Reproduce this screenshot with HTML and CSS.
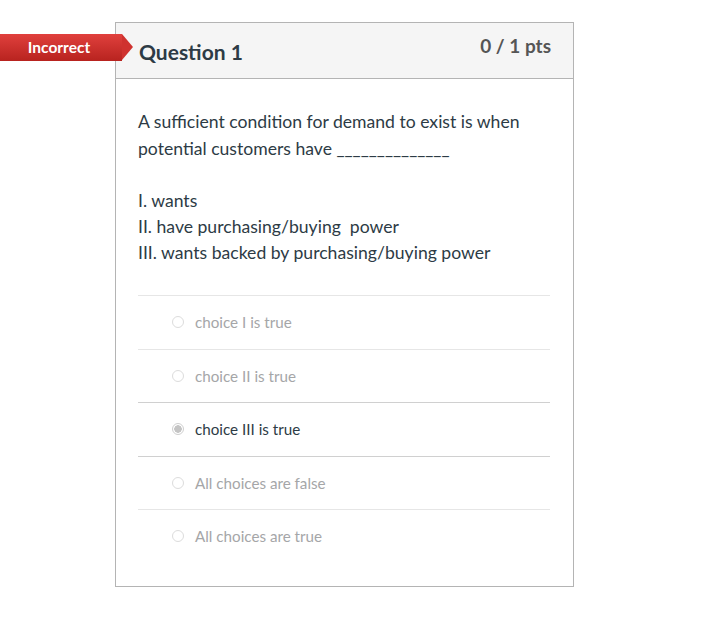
FILE: index.html
```html
<!DOCTYPE html>
<html lang="en">
<head>
    <meta charset="UTF-8">
    <title>Question 1</title>
    <link rel="stylesheet" href="styles.css">
</head>
<body>
    <div class="question">
        <div class="flag">Incorrect</div>
        <div class="header">
            <span class="name">Question 1</span>
            <span class="points">0 / 1 pts</span>
        </div>
        <div class="content">
            <p class="text">A sufficient condition for demand to exist is when potential customers have ______________</p>
            <p class="text">I. wants<br>II. have purchasing/buying&nbsp; power<br>III. wants backed by purchasing/buying power</p>
            <div class="answers">
                <div class="answer"><span class="radio"></span>choice I is true</div>
                <div class="answer"><span class="radio"></span>choice II is true</div>
                <div class="answer selected"><span class="radio"></span>choice III is true</div>
                <div class="answer"><span class="radio"></span>All choices are false</div>
                <div class="answer"><span class="radio"></span>All choices are true</div>
            </div>
        </div>
    </div>
</body>
</html>
```

FILE: styles.css
```css
body {
    margin: 0;
    font-family: Lato, "Open Sans", sans-serif;
    color: #2d3b45;
    background: #fff;
}

.question {
    position: relative;
    width: 457px;
    margin: 22px 0 0 115px;
    border: 1px solid #b4b4b4;
}

.flag {
    position: absolute;
    left: -116px;
    top: 11px;
    width: 122px;
    height: 27px;
    line-height: 27px;
    padding-right: 4px;
    text-align: center;
    color: #fff;
    font-size: 15.5px;
    font-weight: bold;
    background: linear-gradient(#e0403d, #b8231f);
    box-sizing: border-box;
}

.flag::after {
    content: "";
    position: absolute;
    right: -11px;
    top: 0;
    border-top: 13.5px solid transparent;
    border-bottom: 13.5px solid transparent;
    border-left: 11px solid #cf322f;
}

.header {
    display: flex;
    justify-content: space-between;
    height: 55px;
    padding: 0 22px 0 23px;
    background: #f5f5f5;
    border-bottom: 1px solid #b4b4b4;
}

.name {
    align-self: center;
    font-size: 21px;
    font-weight: bold;
    padding-top: 2px;
}

.points {
    padding-top: 11px;
    font-size: 19px;
    font-weight: bold;
    color: #555;
}

.content {
    padding: 29px 23px 23px 22px;
}

.text {
    margin: 0 0 26px;
    font-size: 17.6px;
    line-height: 27px;
}

.text + .text {
    line-height: 26px;
    margin-bottom: 29px;
}

.answers {
    border-top: 1px solid #e6e6e6;
}

.answer {
    display: flex;
    align-items: center;
    height: 52.5px;
    padding-left: 34px;
    font-size: 15.2px;
    color: #a5a6a8;
    border-bottom: 1px solid #e6e6e6;
}

.answer:last-child {
    border-bottom: none;
}

.answer.selected {
    color: #2d3b45;
    border-bottom-color: #d0d0d0;
}

.answers .answer:nth-child(2) {
    border-bottom-color: #d0d0d0;
}

.radio {
    width: 12px;
    height: 12px;
    margin-right: 11px;
    border: 1px solid #dcdcdc;
    border-radius: 50%;
    box-sizing: border-box;
    background: #fff;
}

.selected .radio {
    border-color: #cfcfcf;
    background: radial-gradient(circle, #c4c4c4 0 3.5px, #fff 4px);
}
```
